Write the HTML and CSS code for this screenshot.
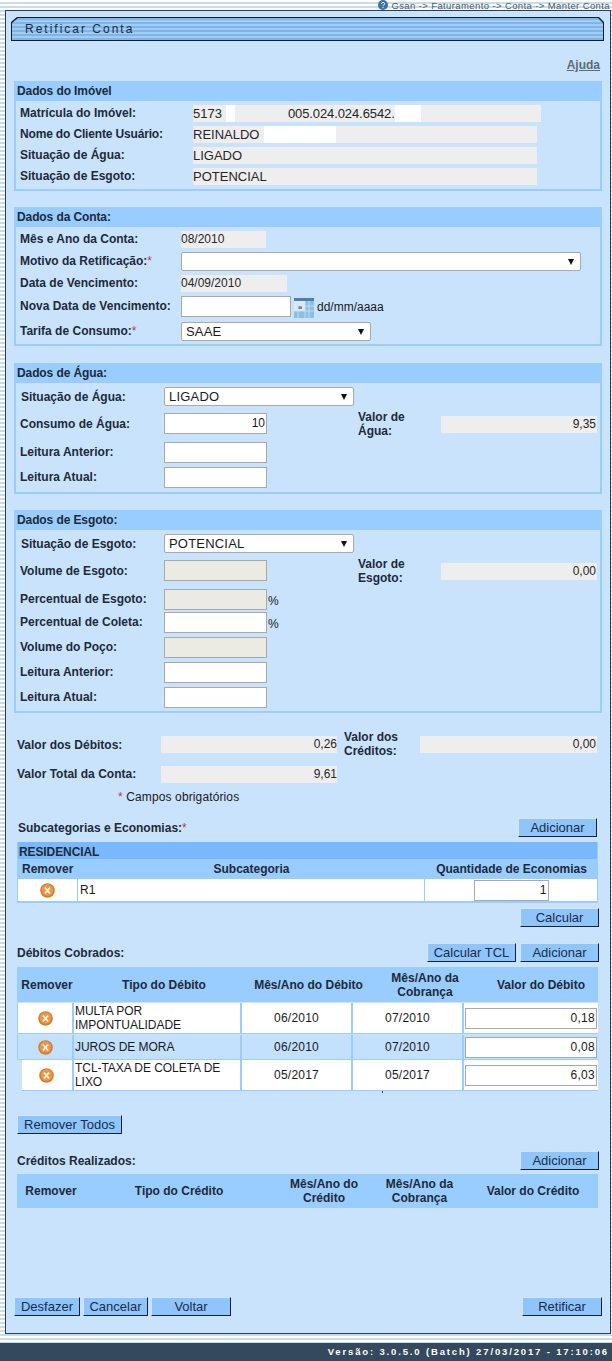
FILE: index.html
```html
<!DOCTYPE html>
<html lang="pt-BR">
<head>
<meta charset="utf-8">
<title>Retificar Conta</title>
<link rel="stylesheet" href="styles.css">
</head>
<body>
<div class="crumbs">
  <svg class="crumb-icon" width="10" height="10" viewBox="0 0 10 10"><circle cx="5" cy="5" r="5" fill="#3d6fa8"/><path d="M3.6 3.8a1.5 1.4 0 1 1 2 1.3c-.5.2-.6.5-.6 1" fill="none" stroke="#fff" stroke-width="1"/><circle cx="5" cy="7.6" r=".7" fill="#fff"/></svg>
  <span>Gsan -&gt; Faturamento -&gt; Conta -&gt; Manter Conta</span>
</div>
<main class="panel">
  <header class="title"><span>Retificar Conta</span></header>
  <div class="help-row"><a class="help" href="#">Ajuda</a></div>

  <section class="box box-imovel">
    <h2>Dados do Imóvel</h2>
    <div class="row-i"><label class="l">Matrícula do Imóvel:</label><div class="ro w-mat"><span>5173</span><i class="mask m1"></i><span class="inscr">005.024.024.6542.</span><i class="mask m2"></i></div></div>
    <div class="row-i"><label class="l tight">Nome do Cliente Usuário:</label><div class="ro w-nome"><span>REINALDO</span><i class="mask m3"></i></div></div>
    <div class="row-i"><label class="l">Situação de Água:</label><div class="ro w-nome"><span>LIGADO</span></div></div>
    <div class="row-i"><label class="l">Situação de Esgoto:</label><div class="ro w-nome"><span>POTENCIAL</span></div></div>
  </section>

  <section class="box box-conta">
    <h2>Dados da Conta:</h2>
    <div class="row-c h21"><label class="l">Mês e Ano da Conta:</label><div class="ro w85 small"><span>08/2010</span></div></div>
    <div class="row-c h23"><label class="l">Motivo da Retificação:<em>*</em></label><div class="sel w400"></div></div>
    <div class="row-c h21"><label class="l">Data de Vencimento:</label><div class="ro w106 small"><span>04/09/2010</span></div></div>
    <div class="row-c h26"><label class="l">Nova Data de Vencimento:</label><div class="inp w110"></div>
      <svg class="cal" width="20" height="20" viewBox="0 0 20 20"><rect width="20" height="20" fill="#8fc0e4"/><rect width="20" height="3" fill="#4d7fb0"/><rect x="0" y="3" width="11" height="10" fill="#dfe9f2"/><rect x="4" y="8" width="4" height="3" fill="#6b8aa8"/><path d="M0 8h20M0 13h20M4 3v17M11 3v17M15 3v17" stroke="#cfe6f6" stroke-width=".7"/></svg>
      <span class="hint">dd/mm/aaaa</span></div>
    <div class="row-c h23"><label class="l">Tarifa de Consumo:<em>*</em></label><div class="sel w190">SAAE</div></div>
  </section>

  <section class="box box-agua">
    <h2>Dados de Água:</h2>
    <div class="cols">
      <div class="stack">
        <div class="row-a r-sel"><label class="l la">Situação de Água:</label><div class="sel w190">LIGADO</div></div>
        <div class="row-a r-e1"><label class="l">Consumo de Água:</label><div class="inp w103 num">10</div></div>
        <div class="row-a r-25"><label class="l">Leitura Anterior:</label><div class="inp w103"></div></div>
        <div class="row-a r-25"><label class="l">Leitura Atual:</label><div class="inp w103"></div></div>
      </div>
      <div class="valor"><label class="l vl">Valor de Água:</label><div class="ro w156 num small"><span>9,35</span></div></div>
    </div>
  </section>

  <section class="box box-esgoto">
    <h2>Dados de Esgoto:</h2>
    <div class="cols">
      <div class="stack">
        <div class="row-a r-sel"><label class="l la">Situação de Esgoto:</label><div class="sel w190">POTENCIAL</div></div>
        <div class="row-a r-e1"><label class="l">Volume de Esgoto:</label><div class="inp w103 off"></div></div>
        <div class="row-a r-e2"><label class="l">Percentual de Esgoto:</label><div class="inp w103 off"></div><span class="pct">%</span></div>
        <div class="row-a r-e3"><label class="l">Percentual de Coleta:</label><div class="inp w103"></div><span class="pct">%</span></div>
        <div class="row-a r-25"><label class="l">Volume do Poço:</label><div class="inp w103 off"></div></div>
        <div class="row-a r-25"><label class="l">Leitura Anterior:</label><div class="inp w103"></div></div>
        <div class="row-a r-25"><label class="l">Leitura Atual:</label><div class="inp w103"></div></div>
      </div>
      <div class="valor"><label class="l vl">Valor de Esgoto:</label><div class="ro w156 num small"><span>0,00</span></div></div>
    </div>
  </section>

  <div class="totals">
    <div class="t-row t1">
      <label class="l t-l">Valor dos Débitos:</label><div class="ro w176 num small"><span>0,26</span></div>
      <label class="l t-c">Valor dos Créditos:</label><div class="ro w177 num small"><span>0,00</span></div>
    </div>
    <div class="t-row t2"><label class="l t-l">Valor Total da Conta:</label><div class="ro w176 num small"><span>9,61</span></div></div>
    <p class="req"><em>*</em> Campos obrigatórios</p>
  </div>

  <div class="bar bar-sub"><label class="l">Subcategorias e Economias:<em>*</em></label><button class="btn b-add" type="button">Adicionar</button></div>
  <div class="grid-sub">
    <div class="g-cat">RESIDENCIAL</div>
    <div class="g-head"><span>Remover</span><span>Subcategoria</span><span>Quantidade de Economias</span></div>
    <div class="g-row">
      <div class="c c-x"><svg class="x" viewBox="0 0 14 14" width="15" height="15"><use href="#xicon"/></svg></div>
      <div class="c c-sub">R1</div>
      <div class="c c-qty"><div class="inp qty num">1</div></div>
    </div>
  </div>
  <div class="calc-row"><button class="btn b-add" type="button">Calcular</button></div>

  <div class="bar bar-deb"><label class="l">Débitos Cobrados:</label><div class="btns"><button class="btn b-tcl" type="button">Calcular TCL</button><button class="btn b-add" type="button">Adicionar</button></div></div>
  <div class="grid-deb">
    <div class="d-head"><span>Remover</span><span>Tipo do Débito</span><span>Mês/Ano do Débito</span><span>Mês/Ano da Cobrança</span><span>Valor do Débito</span></div>
    <div class="d-row h30">
      <div class="c c-x"><svg class="x" viewBox="0 0 14 14" width="15" height="15"><use href="#xicon"/></svg></div>
      <div class="c c-t">MULTA POR IMPONTUALIDADE</div><div class="c c-m">06/2010</div><div class="c c-m">07/2010</div>
      <div class="c c-v"><div class="inp val num">0,18</div></div>
    </div>
    <div class="d-row h24 alt">
      <div class="c c-x"><svg class="x" viewBox="0 0 14 14" width="15" height="15"><use href="#xicon"/></svg></div>
      <div class="c c-t">JUROS DE MORA</div><div class="c c-m">06/2010</div><div class="c c-m">07/2010</div>
      <div class="c c-v"><div class="inp val num">0,08</div></div>
    </div>
    <div class="d-row h30 last">
      <div class="c c-x"><svg class="x" viewBox="0 0 14 14" width="15" height="15"><use href="#xicon"/></svg></div>
      <div class="c c-t">TCL-TAXA DE COLETA DE LIXO</div><div class="c c-m">05/2017</div><div class="c c-m">05/2017</div>
      <div class="c c-v"><div class="inp val num">6,03</div></div>
    </div>
  </div>

  <div class="rem-row"><button class="btn b-rem" type="button">Remover Todos</button></div>

  <div class="bar bar-cre"><label class="l">Créditos Realizados:</label><button class="btn b-add" type="button">Adicionar</button></div>
  <div class="cr-head"><span>Remover</span><span>Tipo do Crédito</span><span>Mês/Ano do Crédito</span><span>Mês/Ano da Cobrança</span><span>Valor do Crédito</span></div>

  <div class="actions">
    <div class="btns">
      <button class="btn b-des" type="button">Desfazer</button>
      <button class="btn b-can" type="button">Cancelar</button>
      <button class="btn b-add b-vol" type="button">Voltar</button>
    </div>
    <button class="btn b-add b-vol" type="button">Retificar</button>
  </div>
</main>
<footer class="foot">Versão: 3.0.5.0 (Batch) 27/03/2017 - 17:10:06</footer>
<svg class="defs" width="0" height="0" aria-hidden="true"><defs>
  <g id="xicon"><circle cx="7" cy="7" r="6.8" fill="#d17f2c"/><circle cx="7" cy="6.6" r="5.4" fill="#e9974a"/><path d="M4.6 4.2 9.4 9.8M9.4 4.2 4.6 9.8" stroke="#fdf3e2" stroke-width="1.7"/></g>
</defs></svg>
</body>
</html>
```
FILE: styles.css
```css
* { box-sizing: border-box; }
html, body { margin: 0; padding: 0; }
body {
  width: 612px;
  height: 1361px;
  overflow: hidden;
  font-family: "Liberation Sans", Arial, sans-serif;
  font-size: 12px;
  color: #1a1a1a;
  background: repeating-linear-gradient(to bottom, #ffffff 0, #ffffff 2px, #c9dcec 2px, #c9dcec 4px);
  display: flex;
  flex-direction: column;
}
.defs { position: absolute; }
.crumbs {
  height: 10px;
  flex: none;
  display: flex;
  justify-content: flex-end;
  align-items: center;
  gap: 3px;
  padding-right: 2px;
  font-size: 9.5px;
  letter-spacing: .39px;
  line-height: 9px;
  color: #4a5a68;
}
.crumb-icon { flex: none; }
.panel {
  margin-left: 5px;
  width: 606px;
  height: 1324px;
  flex: none;
  background: #c9e3fd;
  border: 1px solid #2d3f4f;
  display: flex;
  flex-direction: column;
}
.title {
  margin: 6px 0 0 5px;
  width: 593px;
  height: 24px;
  flex: none;
  padding: 1px;
  background: #111d33;
  clip-path: polygon(6px 0, calc(100% - 5px) 0, 100% 5px, 100% 100%, 0 100%, 0 5px);
}
.title span {
  display: block;
  height: 22px;
  background: repeating-linear-gradient(to bottom, #7fb4e8 0, #7fb4e8 2px, #a3ccf3 2px, #a3ccf3 4px);
  clip-path: polygon(6px 0, calc(100% - 5px) 0, 100% 5px, 100% 100%, 0 100%, 0 5px);
  padding-left: 13px;
  font-size: 12px;
  line-height: 22px;
  letter-spacing: 2px;
  color: #1e2a3a;
}
.help-row { height: 40px; display: flex; justify-content: flex-end; align-items: center; padding: 8px 10px 0 0; flex: none; }
.help { font-size: 12px; font-weight: 700; color: #5d6b78; text-decoration: underline; }
.box {
  margin-left: 8px;
  width: 588px;
  flex: none;
  border: 2px solid #99ccff;
  border-top: 0;
}
.box h2 {
  margin: 0 -2px;
  height: 20px;
  padding-left: 3px;
  background: #99ccff;
  font-size: 12px;
  line-height: 20px;
  font-weight: 700;
  color: #1d2a38;
  letter-spacing: -.1px;
}
.l { font-weight: 700; color: #1d2a38; display: block; flex: none; }
.l em, .req em { color: #c23a3a; font-style: normal; font-weight: 400; }
.tight { letter-spacing: -.16px; }
.ro {
  background: #eeeeee;
  height: 17px;
  font-size: 13px;
  line-height: 17px;
  display: flex;
  flex: none;
  color: #262626;
}
.ro.small { font-size: 12px; }
.mask { background: #fff; display: block; height: 17px; flex: none; }
.sel {
  position: relative;
  height: 19px;
  background: #fff;
  border: 1px solid #a9a9a9;
  border-radius: 2px;
  font-size: 13px;
  line-height: 17px;
  padding-left: 4px;
  letter-spacing: .2px;
  flex: none;
}
.sel::after {
  content: "";
  position: absolute;
  right: 6px;
  top: 6px;
  border: 3.5px solid transparent;
  border-top: 6px solid #111;
  border-bottom: 0;
}
.inp {
  background: #fff;
  border: 1px solid #a9a9a9;
  height: 21px;
  flex: none;
  font-size: 12px;
  line-height: 19px;
  padding-right: 1px;
}
.inp.off { background: #ebebe4; }
.num { text-align: right; justify-content: flex-end; }
.w85 { width: 85px; padding-left: 0; }
.w106 { width: 106px; }
.w110 { width: 110px; }
.w400 { width: 400px; }
.w190 { width: 190px; }
.w103 { width: 103px; }
.w156 { width: 156px; padding-right: 1px; }
.w176 { width: 176px; }
.w177 { width: 177px; padding-right: 1px; }

.box-imovel { height: 110px; }
.row-i { height: 17px; margin-top: 4px; display: flex; align-items: center; padding-left: 4px; }
.row-i .l { width: 173px; margin-bottom: 2px; }
.w-mat { width: 348px; }
.w-nome { width: 344px; }
.m1 { width: 9px; margin-left: 4px; }
.inscr { margin-left: 53px; letter-spacing: -.1px; }
.m2 { width: 26px; }
.m3 { width: 72px; margin-left: 5px; }

.box-conta { margin-top: 16px; height: 139px; }
.box-conta h2 { margin-bottom: 4px; }
.row-c { display: flex; align-items: center; padding-left: 4px; }
.row-c .l { width: 161px; margin-bottom: 1px; }
.row-c .ro span { display: block; }
.h21 { height: 17px; margin-bottom: 4px; }
.h23 { height: 19px; margin-bottom: 4px; }
.h26 { height: 21px; margin-bottom: 5px; }
.cal { margin-left: 3px; flex: none; margin-top: 3px; }
.hint { margin-left: 3px; font-size: 12px; }

.box-agua { margin-top: 17px; height: 131px; }
.box-esgoto { margin-top: 16px; height: 203px; }
.cols { display: flex; }
.stack { width: 342px; flex: none; padding-top: 4px; }
.row-a { display: flex; align-items: center; padding-left: 4px; }
.row-a .l { width: 144px; }
.row-a .la { padding-left: 1px; }
.r-sel { height: 19px; margin-bottom: 7px; }
.r-25 { height: 21px; margin-bottom: 4px; }
.r-e1 { height: 21px; margin-bottom: 8px; }
.r-e2 { height: 21px; margin-bottom: 2px; }
.r-e3 { height: 21px; margin-bottom: 4px; }
.r-25 .l, .r-e2 .l, .r-e3 .l { margin-bottom: 2px; }
.pct { margin-left: 1px; font-size: 12px; margin-top: 3px; }
.valor { display: flex; align-items: center; padding-top: 15px; height: 67px; }
.vl { width: 83px; line-height: 14px; padding-right: 20px; }

.totals { margin: 23px 0 0 11px; flex: none; }
.t-row { display: flex; }
.t1 { height: 30px; }
.t2 { height: 17px; }
.t-l { width: 144px; line-height: 17px; }
.t1 .t-l { line-height: 19px; }
.t-c { width: 76px; margin-left: 7px; line-height: 14px; margin-top: -6px; height: 28px; }
.req { margin: 7px 0 0 101px; height: 14px; font-size: 12px; letter-spacing: .12px; line-height: 14px; }

.bar { display: flex; justify-content: space-between; align-items: center; flex: none; }
.btns { display: flex; gap: 3px; }
.btn {
  display: block;
  height: 19px;
  padding: 0;
  margin: 0;
  border-right: 1px solid #13233f;
  border-bottom: 1px solid #13233f;
  border-top: 1px solid #cfe6ff;
  border-left: 1px solid #cfe6ff;
  background: #90c5fb;
  color: #1a2b4a;
  font-family: "Liberation Sans", Arial, sans-serif;
  font-size: 13px;
  line-height: 16px;
  flex: none;
}
.b-add { width: 79px; }
.b-tcl { width: 89px; margin-right: 1px; }
.b-rem { width: 105px; }
.b-des { width: 66px; }
.b-can { width: 65px; }
.b-vol { width: 80px; }

.bar-sub { margin: 14px 13px 0 12px; height: 19px; }
.grid-sub { margin: 5px 0 0 11px; width: 581px; height: 61px; flex: none; background: #99ccff; padding-bottom: 2px; }
.g-cat { height: 17px; background: #7ab8fb; margin: 0 1px; padding-left: 1px; font-weight: 700; line-height: 20px; color: #1d2a38; letter-spacing: -.1px; }
.g-head { height: 20px; display: grid; grid-template-columns: 61px 347px 1fr; font-weight: 700; text-align: center; line-height: 20px; color: #1d2a38; }
.g-head span:first-child { text-align: left; padding-left: 5px; }
.g-row { height: 22px; display: grid; grid-template-columns: 59px 346px 1fr; column-gap: 1px; margin: 0 1px; }
.c { background: #fff; display: flex; align-items: center; font-size: 12px; }
.c-x { justify-content: center; }
.c-sub { padding-left: 2px; letter-spacing: .1px; }
.c-qty { justify-content: center; }
.qty { width: 75px; height: 21px; }
.calc-row { margin: 5px 11px 0 0; display: flex; justify-content: flex-end; flex: none; }

.bar-deb { margin: 16px 11px 0 11px; height: 19px; }
.grid-deb { margin: 5px 0 0 11px; width: 581px; height: 124px; flex: none; position: relative; }
.grid-deb::after { content: ""; position: absolute; left: 365px; bottom: -2px; width: 1px; height: 2px; background: #444; }
.d-head {
  height: 35px;
  background: #99ccff;
  display: grid;
  grid-template-columns: 60px 174px 115px 118px 1fr;
  text-align: center;
  align-items: center;
  font-weight: 700;
  line-height: 14px;
  color: #1d2a38;
}
.d-row {
  margin-top: 1px;
  display: grid;
  grid-template-columns: 54px 166px 109px 109px 1fr;
  column-gap: 2px;
  background: #99ccff;
  border-bottom: 1px solid #99ccff;
  padding-left: 1px;
}
.h30 { height: 31px; }
.h24 { height: 25px; }
.d-row .c-t { padding-left: 1px; line-height: 14px; letter-spacing: -.05px; }
.d-row .c-m { justify-content: center; letter-spacing: .2px; }
.c-v { justify-content: center; }
.val { width: 132px; height: 21px; letter-spacing: .3px; }
.alt .c { background: #c3e0fd; }
.last { margin: 0 0 0 5px; grid-template-columns: 50px 166px 109px 109px 1fr; padding-left: 0; }
.last .c-x { padding-right: 2px; }

.rem-row { margin: 24px 0 0 11px; flex: none; }
.bar-cre { margin: 17px 11px 0 11px; height: 19px; }
.cr-head {
  margin: 4px 0 0 11px;
  width: 581px;
  height: 34px;
  flex: none;
  background: #99ccff;
  display: grid;
  grid-template-columns: 68px 188px 102px 89px 1fr;
  text-align: center;
  align-items: center;
  font-weight: 700;
  line-height: 14px;
  color: #1d2a38;
}
.cr-head span:last-child { padding-left: 4px; }
.actions { margin: 89px 8px 0 8px; display: flex; justify-content: space-between; flex: none; }

.foot {
  margin-top: 9px;
  height: 18px;
  flex: none;
  background: #34495e;
  color: #fff;
  font-size: 9.5px;
  font-weight: 700;
  line-height: 18px;
  letter-spacing: 1.85px;
  text-align: right;
  padding-right: 3px;
}
```
